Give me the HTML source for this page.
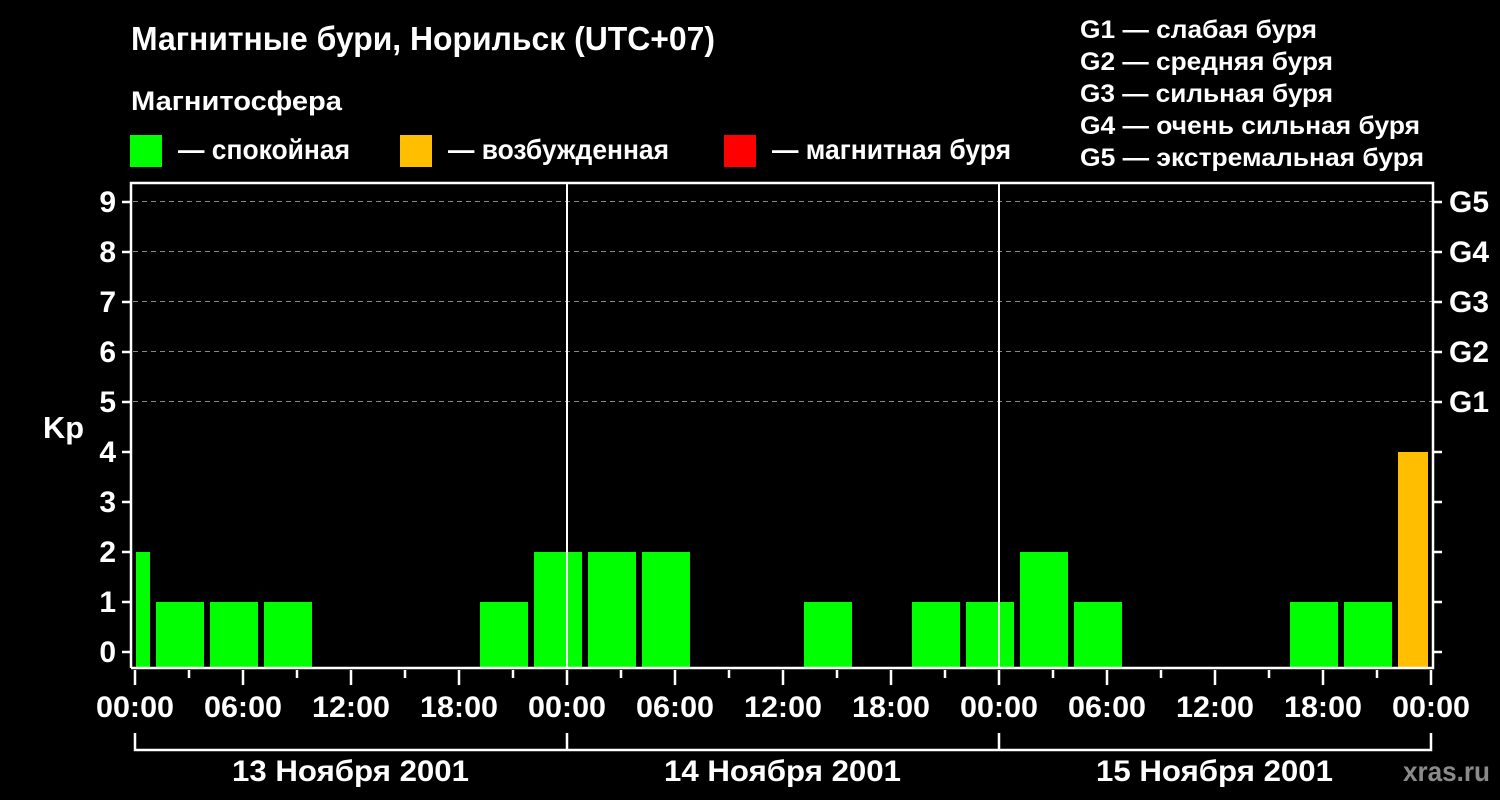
<!DOCTYPE html>
<html><head><meta charset="utf-8"><style>
html,body{margin:0;padding:0;background:#000;}
svg{display:block}
text{font-family:"Liberation Sans",Arial,sans-serif;font-weight:bold;fill:#fff}
</style></head><body>
<svg width="1500" height="800" viewBox="0 0 1500 800" xmlns="http://www.w3.org/2000/svg">
<rect width="1500" height="800" fill="#000"/>
<text x="131" y="50" font-size="33" textLength="584" lengthAdjust="spacingAndGlyphs">Магнитные бури, Норильск (UTC+07)</text>
<text x="131" y="110" font-size="27" textLength="211" lengthAdjust="spacingAndGlyphs">Магнитосфера</text>
<rect x="130" y="135" width="32" height="32" fill="#00ff00"/>
<rect x="400" y="135" width="32" height="32" fill="#ffbf00"/>
<rect x="724" y="135" width="32" height="32" fill="#ff0000"/>
<text x="178" y="159" font-size="28" textLength="172" lengthAdjust="spacingAndGlyphs">— спокойная</text>
<text x="448" y="159" font-size="28" textLength="221" lengthAdjust="spacingAndGlyphs">— возбужденная</text>
<text x="772" y="159" font-size="28" textLength="239" lengthAdjust="spacingAndGlyphs">— магнитная буря</text>
<g font-size="25">
<text x="1080" y="38" textLength="237" lengthAdjust="spacingAndGlyphs">G1 — слабая буря</text>
<text x="1080" y="70" textLength="253" lengthAdjust="spacingAndGlyphs">G2 — средняя буря</text>
<text x="1080" y="102" textLength="253" lengthAdjust="spacingAndGlyphs">G3 — сильная буря</text>
<text x="1080" y="134" textLength="340" lengthAdjust="spacingAndGlyphs">G4 — очень сильная буря</text>
<text x="1080" y="166" textLength="344" lengthAdjust="spacingAndGlyphs">G5 — экстремальная буря</text>
</g>
<g stroke="#888" stroke-width="1" stroke-dasharray="5,4">
<line x1="133" y1="201.5" x2="1432" y2="201.5"/>
<line x1="133" y1="251.5" x2="1432" y2="251.5"/>
<line x1="133" y1="301.5" x2="1432" y2="301.5"/>
<line x1="133" y1="351.5" x2="1432" y2="351.5"/>
<line x1="133" y1="401.5" x2="1432" y2="401.5"/>
</g>
<g fill="#00ff00">
<rect x="136" y="552" width="14" height="116"/>
<rect x="156" y="602" width="48" height="66"/>
<rect x="210" y="602" width="48" height="66"/>
<rect x="264" y="602" width="48" height="66"/>
<rect x="480" y="602" width="48" height="66"/>
<rect x="534" y="552" width="48" height="116"/>
<rect x="588" y="552" width="48" height="116"/>
<rect x="642" y="552" width="48" height="116"/>
<rect x="804" y="602" width="48" height="66"/>
<rect x="912" y="602" width="48" height="66"/>
<rect x="966" y="602" width="48" height="66"/>
<rect x="1020" y="552" width="48" height="116"/>
<rect x="1074" y="602" width="48" height="66"/>
<rect x="1290" y="602" width="48" height="66"/>
<rect x="1344" y="602" width="48" height="66"/>
</g>
<rect x="1398" y="452" width="30" height="216" fill="#ffbf00"/>
<g stroke="#fff" stroke-width="2.5" fill="none">
<polyline points="131,668 131,183 1433,183 1433,668 131,668"/>
<line x1="567" y1="183" x2="567" y2="668" stroke-width="2"/>
<line x1="999" y1="183" x2="999" y2="668" stroke-width="2"/>
</g>
<g stroke="#fff" stroke-width="2.5">
<path d="M122 202H131M122 252H131M122 302H131M122 352H131M122 402H131M122 452H131M122 502H131M122 552H131M122 602H131M122 652H131"/>
<path d="M1433 202H1442M1433 252H1442M1433 302H1442M1433 352H1442M1433 402H1442M1433 452H1442M1433 502H1442M1433 552H1442M1433 602H1442M1433 652H1442"/>
<path d="M135 670V685M189 670V678M243 670V685M297 670V678M351 670V685M405 670V678M459 670V685M513 670V678M567 670V685M621 670V678M675 670V685M729 670V678M783 670V685M837 670V678M891 670V685M945 670V678M999 670V685M1053 670V678M1107 670V685M1161 670V678M1215 670V685M1269 670V678M1323 670V685M1377 670V678M1431 670V685"/>
<path d="M135 733V750H1431V733M567 733V750M999 733V750" fill="none"/>
</g>
<g font-size="30" text-anchor="end">
<text x="116" y="212">9</text><text x="116" y="262">8</text><text x="116" y="312">7</text>
<text x="116" y="362">6</text><text x="116" y="412">5</text><text x="116" y="462">4</text>
<text x="116" y="512">3</text><text x="116" y="562">2</text><text x="116" y="612">1</text>
<text x="116" y="662">0</text>
</g>
<g font-size="30">
<text x="1449" y="212" textLength="40" lengthAdjust="spacingAndGlyphs">G5</text>
<text x="1449" y="262" textLength="40" lengthAdjust="spacingAndGlyphs">G4</text>
<text x="1449" y="312" textLength="40" lengthAdjust="spacingAndGlyphs">G3</text>
<text x="1449" y="362" textLength="40" lengthAdjust="spacingAndGlyphs">G2</text>
<text x="1449" y="412" textLength="40" lengthAdjust="spacingAndGlyphs">G1</text>
</g>
<text x="43" y="438" font-size="31" textLength="41" lengthAdjust="spacingAndGlyphs">Kp</text>
<g font-size="30">
<text x="96" y="717" textLength="78" lengthAdjust="spacingAndGlyphs">00:00</text>
<text x="204" y="717" textLength="78" lengthAdjust="spacingAndGlyphs">06:00</text>
<text x="312" y="717" textLength="78" lengthAdjust="spacingAndGlyphs">12:00</text>
<text x="420" y="717" textLength="78" lengthAdjust="spacingAndGlyphs">18:00</text>
<text x="528" y="717" textLength="78" lengthAdjust="spacingAndGlyphs">00:00</text>
<text x="636" y="717" textLength="78" lengthAdjust="spacingAndGlyphs">06:00</text>
<text x="744" y="717" textLength="78" lengthAdjust="spacingAndGlyphs">12:00</text>
<text x="852" y="717" textLength="78" lengthAdjust="spacingAndGlyphs">18:00</text>
<text x="960" y="717" textLength="78" lengthAdjust="spacingAndGlyphs">00:00</text>
<text x="1068" y="717" textLength="78" lengthAdjust="spacingAndGlyphs">06:00</text>
<text x="1176" y="717" textLength="78" lengthAdjust="spacingAndGlyphs">12:00</text>
<text x="1284" y="717" textLength="78" lengthAdjust="spacingAndGlyphs">18:00</text>
<text x="1392" y="717" textLength="78" lengthAdjust="spacingAndGlyphs">00:00</text>
<text x="232" y="781" textLength="237" lengthAdjust="spacingAndGlyphs">13 Ноября 2001</text>
<text x="664" y="781" textLength="237" lengthAdjust="spacingAndGlyphs">14 Ноября 2001</text>
<text x="1096" y="781" textLength="237" lengthAdjust="spacingAndGlyphs">15 Ноября 2001</text>
</g>
<text x="1403" y="781" font-size="28" style="fill:#8a8a8a" textLength="87" lengthAdjust="spacingAndGlyphs">xras.ru</text>
</svg>
</body></html>
